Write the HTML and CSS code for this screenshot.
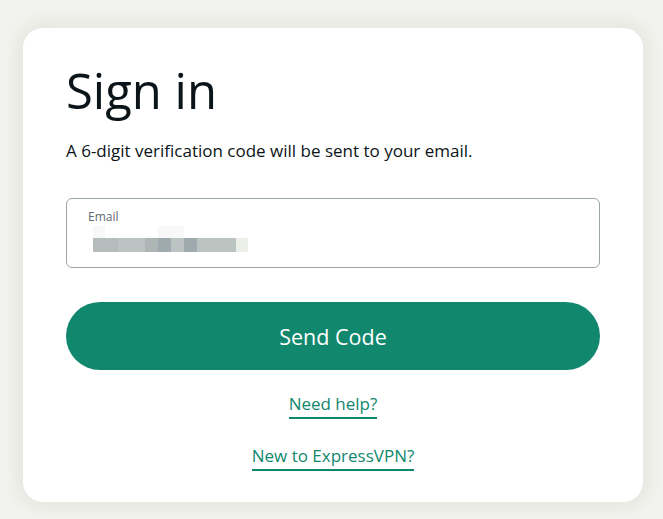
FILE: index.html
```html
<!DOCTYPE html>
<html lang="en">
<head>
<meta charset="utf-8">
<title>Sign in</title>
<link rel="stylesheet" href="styles.css">
</head>
<body>
<main class="card">
  <h1 class="title">Sign in</h1>
  <p class="lead">A 6-digit verification code will be sent to your email.</p>
  <div class="field">
    <span class="field-label">Email</span>
    <div class="blur">
      <div class="blur-top">
        <span class="bt bt1"></span><span class="bt bt2"></span>
      </div>
      <div class="blur-row">
        <span class="b b1"></span><span class="b b2"></span><span class="b b3"></span><span class="b b4"></span><span class="b b5"></span><span class="b b6"></span><span class="b b7"></span><span class="b b8"></span>
      </div>
    </div>
  </div>
  <button class="send" type="button">Send Code</button>
  <div class="links">
    <a class="link" href="#">Need help?</a>
    <a class="link" href="#">New to ExpressVPN?</a>
  </div>
</main>
</body>
</html>
```

FILE: styles.css
```css
* { box-sizing: border-box; }
html, body { margin: 0; padding: 0; }
body {
  background: #f2f2ee;
  font-family: "Open Sans", "Noto Sans", sans-serif;
  color: #0b1418;
  padding: 28px 20px 0 23px;
  height: 519px;
  overflow: hidden;
}
.card {
  width: 620px;
  height: 474px;
  background: #ffffff;
  border-radius: 20px;
  box-shadow: 0 0 14px 6px rgba(160, 160, 130, 0.12);
  padding: 30px 43px 0 43px;
  display: flex;
  flex-direction: column;
}
.title {
  margin: 0;
  font-size: 49px;
  font-weight: 400;
  line-height: 64px;
  letter-spacing: 0;
}
.lead {
  margin: 17px 0 0 0;
  font-size: 17px;
  line-height: 24px;
}
.field {
  margin-top: 35px;
  height: 70px;
  border: 1px solid #9ba6ab;
  border-radius: 6px;
  padding: 10px 21px 0 21px;
  display: flex;
  flex-direction: column;
}
.field-label {
  font-size: 12px;
  line-height: 16px;
  color: #5f6a6f;
}
.blur { margin-top: 1px; margin-left: 5px; }
.blur-top { display: flex; height: 12px; }
.bt { display: block; height: 12px; background: #f7f8f8; }
.bt1 { width: 12px; }
.bt2 { width: 26px; margin-left: 53px; }
.blur-row { display: flex; height: 14px; }
.b { display: block; height: 14px; }
.b1 { width: 25px; background: #b5bdbc; }
.b2 { width: 27px; background: #bcc4c3; }
.b3 { width: 13px; background: #aeb6b5; }
.b4 { width: 13px; background: #9eaaad; }
.b5 { width: 13px; background: #bcc4c3; }
.b6 { width: 13px; background: #9eaaad; }
.b7 { width: 39px; background: #bcc4c2; }
.b8 { width: 12px; background: #eceee8; }
.send {
  margin-top: 34px;
  height: 68px;
  width: 100%;
  border: none;
  border-radius: 34px;
  background: #11876d;
  color: #ffffff;
  font-family: inherit;
  font-size: 21.5px;
  font-weight: 500;
  cursor: pointer;
}
.links {
  margin-top: 22px;
  display: flex;
  flex-direction: column;
  align-items: center;
  gap: 25px;
}
.link {
  color: #11876d;
  font-size: 17px;
  line-height: 24px;
  text-decoration: none;
  border-bottom: 2px solid #11876d;
  padding-bottom: 1px;
}
```
